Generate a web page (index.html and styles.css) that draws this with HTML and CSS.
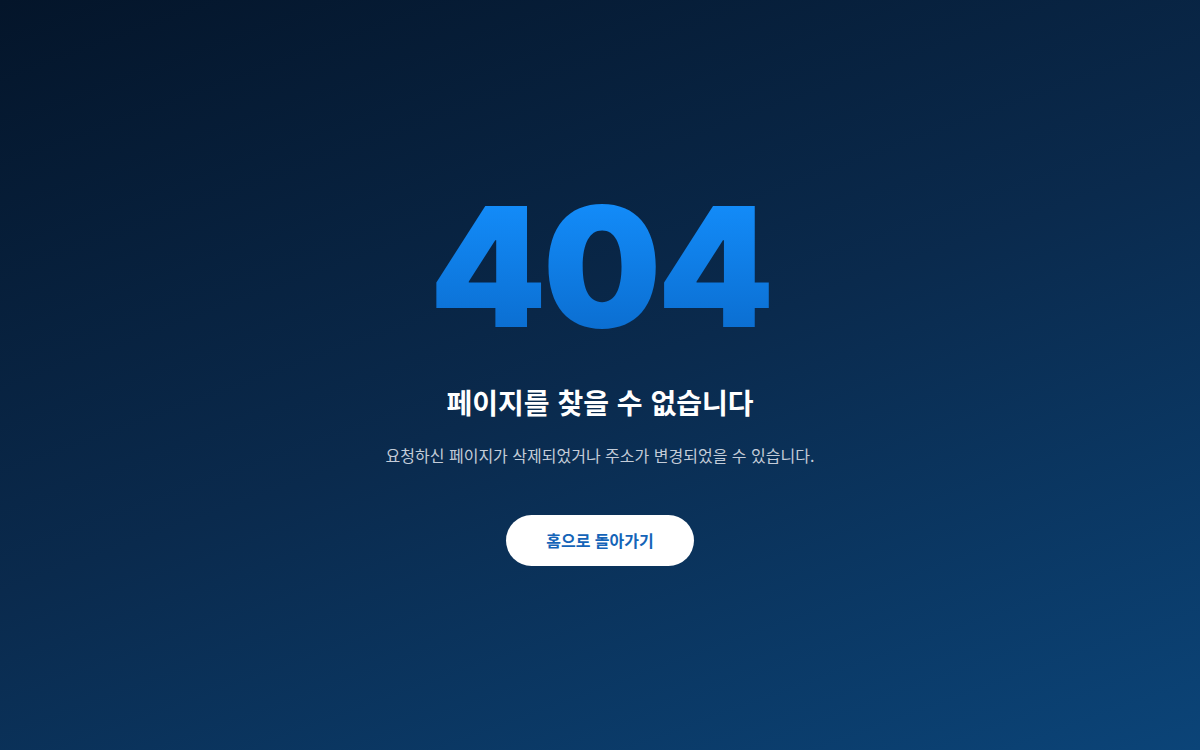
FILE: index.html
```html
<!DOCTYPE html>
<html lang="ko">
<head>
<meta charset="utf-8">
<title>404</title>
<link rel="stylesheet" href="styles.css">
</head>
<body>
<main class="page">
  <div class="code">404</div>
  <h1 class="title">페이지를 찾을 수 없습니다</h1>
  <p class="desc">요청하신 페이지가 삭제되었거나 주소가 변경되었을 수 있습니다.</p>
  <a class="btn" href="#">홈으로 돌아가기</a>
</main>
</body>
</html>
```
FILE: styles.css
```css
html, body {
  margin: 0;
  height: 100%;
}
body {
  background: linear-gradient(160deg, #04152a 0%, #0a2a4d 50%, #0b4478 100%);
  font-family: "Noto Sans CJK KR", sans-serif;
  color: #fff;
}
.page {
  box-sizing: border-box;
  height: 100%;
  padding-bottom: 2px;
  display: flex;
  flex-direction: column;
  align-items: center;
  justify-content: center;
  text-align: center;
}
.code {
  font-family: Inter, sans-serif;
  font-weight: 900;
  font-size: 167px;
  line-height: 1;
  letter-spacing: -4px;
  background: linear-gradient(180deg, #1490ff 0%, #0a6acb 100%);
  -webkit-background-clip: text;
  background-clip: text;
  color: transparent;
}
.title {
  margin: 32px 0 0;
  font-weight: 700;
  font-size: 28px;
  line-height: 40px;
}
.desc {
  margin: 21px 0 0;
  font-size: 16px;
  line-height: 24px;
  color: #c3ccd8;
}
.btn {
  margin-top: 48px;
  width: 188px;
  height: 51px;
  border-radius: 26px;
  background: #fff;
  color: #1464b8;
  font-weight: 700;
  font-size: 16px;
  display: flex;
  align-items: center;
  justify-content: center;
  text-decoration: none;
}
```
